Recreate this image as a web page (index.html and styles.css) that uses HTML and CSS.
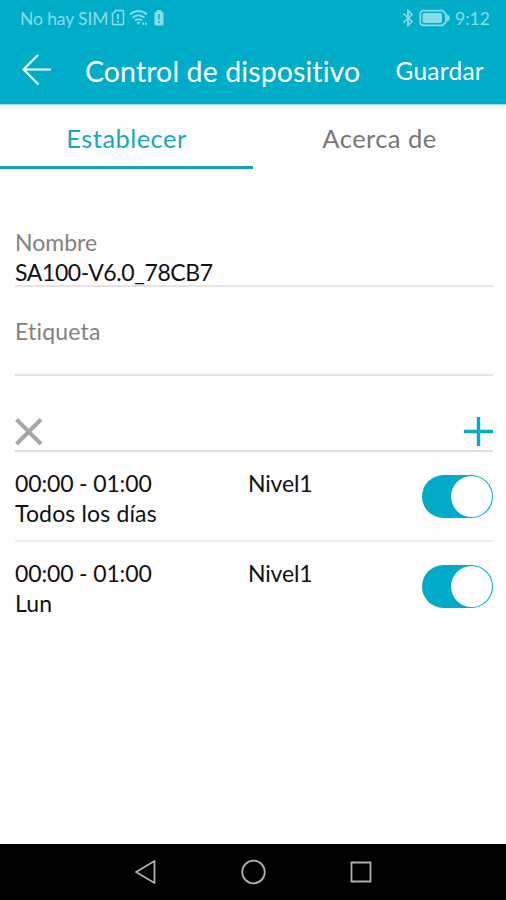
FILE: index.html
```html
<!DOCTYPE html>
<html lang="es">
<head>
    <meta charset="UTF-8">
    <meta name="viewport" content="width=device-width, initial-scale=1.0">
    <title>Control de dispositivo</title>
    <link rel="stylesheet" href="styles.css">
</head>
<body>
    <header class="header">
        <div class="status-bar">
            <span class="carrier">No hay SIM</span>
            <svg class="sim-icon" width="14" height="18" viewBox="0 0 14 18" fill="none" stroke="currentColor" stroke-width="1.5">
                <path d="M5 1.5h6.500q1 0 1 1v12q0 1-1 1h-9q-1 0-1-1V5z"/>
                <path d="M7 5v5M7 11.500v2" stroke-width="2"/>
            </svg>
            <svg class="wifi-icon" width="20" height="18" viewBox="0 0 20 18" fill="none" stroke="currentColor" stroke-width="2">
                <path d="M1 5.500q8.500-7 17 0M3.500 8.800q6-5 12 0M6 11.800q3.500-3 7 0"/>
                <path d="M7.500 13h4l-2 3zM15 13v3.500l-2.500-1.700zM16 13v3.500l2.500-1.700z" fill="currentColor" stroke="none"/>
            </svg>
            <svg class="small-battery" width="10" height="18" viewBox="0 0 10 18">
                <path fill="currentColor" fill-rule="evenodd" d="M3 1h4v1.500h1q1.500 0 1.500 1.500v11q0 1.500-1.500 1.500H2Q.5 16.500.5 15V4q0-1.500 1.500-1.500h1zM4.300 5v5.500h1.400V5zM4.300 12v2h1.400v-2z"/>
            </svg>
            <svg class="bluetooth-icon" width="12" height="18" viewBox="0 0 12 18" fill="none" stroke="currentColor" stroke-width="1.7">
                <path d="M1.500 4.500l8.500 8-4 4V1.500l4 4-8.500 8"/>
            </svg>
            <svg class="battery-icon" width="32" height="18" viewBox="0 0 32 18">
                <path d="M4.500 1.700h19l3.200 3v8.600l-3.200 3h-19Q1.200 16.300 1.200 13V5q0-3.300 3.300-3.300z" fill="none" stroke="currentColor" stroke-width="1.700"/>
                <rect x="3.500" y="4" width="19.500" height="10" rx="1.500" fill="currentColor"/>
                <path d="M27.500 5l3 2v4l-3 2z" fill="currentColor"/>
            </svg>
            <span class="clock">9:12</span>
        </div>
        <div class="title-bar">
            <svg class="back-icon" width="30" height="32" viewBox="0 0 30 32" fill="none" stroke="currentColor" stroke-width="2.200">
                <path d="M16 1L1.500 15.500l15 15M1.500 15.500H29"/>
            </svg>
            <h1 class="title">Control de dispositivo</h1>
            <span class="save">Guardar</span>
        </div>
    </header>

    <nav class="tabs">
        <div class="tab active">Establecer</div>
        <div class="tab">Acerca de</div>
    </nav>

    <main class="content">
        <div class="field">
            <div class="label">Nombre</div>
            <div class="value">SA100-V6.0_78CB7</div>
        </div>
        <div class="field tag-field">
            <div class="label tag-label">Etiqueta</div>
        </div>

        <div class="actions">
            <svg class="delete-icon" width="28" height="28" viewBox="0 0 28 28" fill="none" stroke="currentColor" stroke-width="4">
                <path d="M1.500 1.500l24.500 24.500M26 1.500l-24.500 24.500"/>
            </svg>
            <svg class="add-icon" width="29" height="29" viewBox="0 0 29 29" fill="none" stroke="currentColor" stroke-width="3.400">
                <path d="M14.500 0v29M0 14.500h29"/>
            </svg>
        </div>

        <div class="schedule">
            <div class="period">
                <div class="time">00:00 - 01:00</div>
                <div class="days">Todos los días</div>
            </div>
            <div class="level">Nivel1</div>
            <div class="toggle"><div class="knob"></div></div>
        </div>
        <div class="schedule last">
            <div class="period">
                <div class="time">00:00 - 01:00</div>
                <div class="days">Lun</div>
            </div>
            <div class="level">Nivel1</div>
            <div class="toggle"><div class="knob"></div></div>
        </div>
    </main>

    <footer class="nav-bar">
        <svg width="24" height="28" viewBox="0 0 24 28"><path d="M21.500 3v22L3 14z"/></svg>
        <svg width="28" height="28" viewBox="0 0 28 28"><circle cx="14.500" cy="14" r="11.300"/></svg>
        <svg width="24" height="28" viewBox="0 0 24 28"><path d="M2.500 4.500h19v19h-19z"/></svg>
    </footer>
</body>
</html>
```
FILE: styles.css
```css
* {
    box-sizing: border-box;
}

body {
    font-family: Lato, "Open Sans", sans-serif;
    font-size: 23px;
    line-height: 30px;
    font-variant-ligatures: none;
    background-color: #fefefe;
    color: #111;
    margin: 0;
    height: 900px;
    display: flex;
    flex-direction: column;
    white-space: nowrap;
}

svg {
    display: block;
    flex: none;
}

.header {
    height: 104px;
    background-color: #00adc9;
    color: #fff;
}

.status-bar {
    height: 36px;
    display: flex;
    align-items: center;
    padding: 0 15px 0 20px;
    color: #8adbe8;
    font-size: 17.5px;
}

.carrier {
    width: 91px;
    margin-top: 2px;
    letter-spacing: -0.1px;
}

.wifi-icon {
    margin-left: 4px;
}

.small-battery {
    margin-left: 5px;
}

.bluetooth-icon {
    margin-left: auto;
}

.battery-icon {
    margin-left: 5px;
}

.clock {
    width: 36px;
    margin-top: 1px;
    margin-left: 4px;
}

.title-bar {
    height: 68px;
    display: flex;
    align-items: center;
    padding: 0 22px 0 22px;
}

.title {
    margin: 2px 0 0 33px;
    font-size: 28.5px;
    font-weight: 400;
    letter-spacing: 0.1px;
}

.save {
    margin-top: 2px;
    margin-left: auto;
    font-size: 24.5px;
    letter-spacing: 0.25px;
}

.tabs {
    height: 65px;
    display: flex;
    border-top: 1px solid #98e3f0;
}

.tab {
    width: 50%;
    padding-top: 18px;
    border-bottom: 3px solid transparent;
    text-align: center;
    font-size: 25.5px;
    letter-spacing: 0.45px;
    color: #777;
}

.tab.active {
    color: #18a7be;
    border-color: #1a9fb8;
}

.content {
    flex: 1;
    padding: 58px 13px 0 15px;
}

.field {
    height: 60px;
    border-bottom: 2px solid #e4e4e4;
}

.label {
    color: #828282;
}

.value {
    letter-spacing: -0.4px;
}

.tag-field {
    height: 89px;
    padding-top: 29px;
}

.tag-label {
    letter-spacing: 0.2px;
}

.actions {
    height: 76px;
    display: flex;
    justify-content: space-between;
    align-items: flex-end;
    padding-bottom: 4px;
    border-bottom: 2px solid #dedede;
}

.delete-icon {
    color: #a6a6a6;
}

.add-icon {
    color: #0aaac4;
}

.schedule {
    height: 90px;
    display: flex;
    padding-top: 16px;
    border-bottom: 2px solid #ececec;
}

.schedule.last {
    border: none;
}

.period {
    width: 233px;
}

.time,
.level {
    letter-spacing: -0.15px;
}

.days {
    letter-spacing: 0.15px;
}

.toggle {
    width: 71px;
    height: 43px;
    margin-top: 7px;
    margin-left: auto;
    padding: 1px;
    display: flex;
    justify-content: flex-end;
    border-radius: 22px;
    background-color: #00abc8;
}

.knob {
    width: 41px;
    height: 41px;
    border-radius: 50%;
    background-color: #fefefe;
}

.nav-bar {
    height: 56px;
    display: flex;
    align-items: center;
    justify-content: space-between;
    padding: 0 133px;
    background-color: #000;
}

.nav-bar svg {
    fill: none;
    stroke: #b0b0b0;
    stroke-width: 1.8;
    stroke-linejoin: round;
}
```
